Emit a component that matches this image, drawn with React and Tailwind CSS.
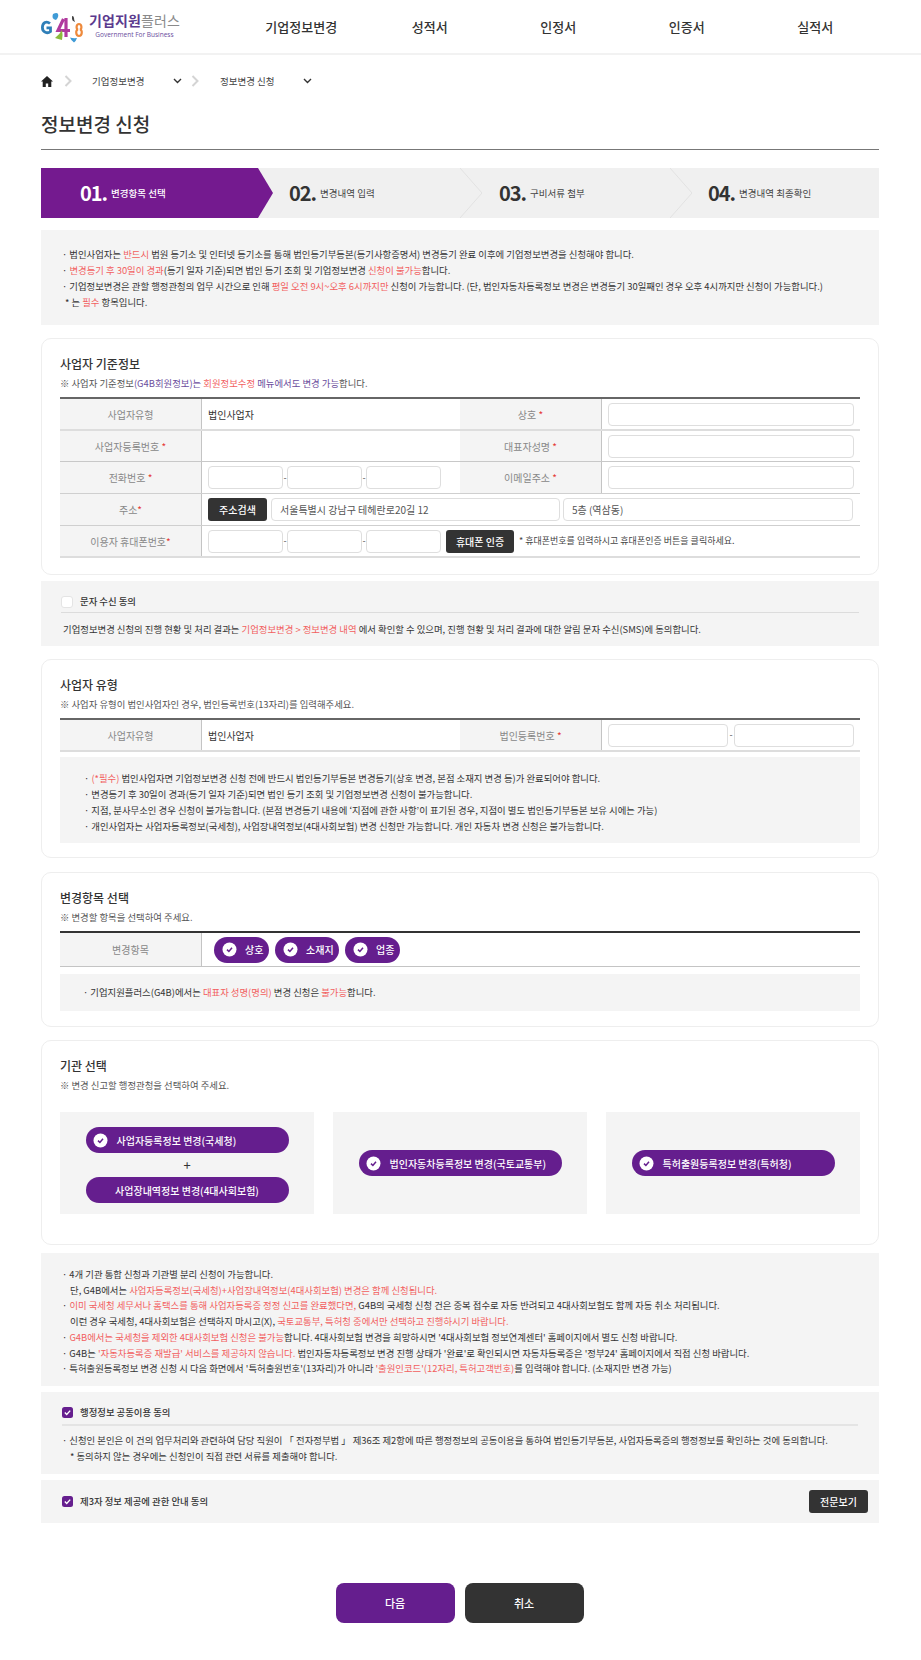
import React from "react";

const R = ({ children }) => <span className="text-[#f25f5f]">{children}</span>;
const P = ({ children }) => <span className="text-[#6a4c9c]">{children}</span>;
const Star = () => <span className="text-[#e53935]">*</span>;

function Logo() {
  return (
    <div className="flex items-center">
      <svg width="46" height="32" viewBox="0 0 46 32" fill="none" className="mr-[2px]">
        <path d="M9 12.5 C5.5 9.5 1.4 11.5 1.4 16.5 C1.4 21.5 6.5 23 9.5 20.5 V16.8 H5.5" stroke="#2f7fb8" strokeWidth="2.8" />
        <path d="M22.5 8 L17 19.5 H29 M25 7 V26" stroke="#b03a9e" strokeWidth="3.2" />
        <path d="M38 13 C35 13 35 18 37 18.5 C34.5 19 34.5 25 38 25 C41.5 25 41.5 19 39 18.5 C41 18 41 13 38 13Z" stroke="#ee8a3c" strokeWidth="2.2" />
        <path d="M12 3 q4 -2 5 0 q1 3 -2 6 q-5 -1 -3 -6z" fill="#3f9bd6" />
        <path d="M14 27 q5 -4 7 -8 q1 4 0 10 q-4 -1 -7 -2z" fill="#8dbb3c" />
        <path d="M29 26.5 q3 1 7 .5 q-1 3 -3 4.5 q-3 -2 -4 -5z" fill="#3f9bd6" />
        <path d="M31 5 q2 0 2 2 q0 2 1 4 q-3 -1 -3 -3z" fill="#444" />
      </svg>
      <div className="flex flex-col items-center mt-[-2px]">
        <div className="text-[14px] leading-[18px] font-bold tracking-[0.1px] text-[#5b3a8e]">
          기업지원<span className="font-normal text-[#8a8a8a]">플러스</span>
        </div>
        <div className="text-[6.5px] leading-[10px] mt-[1px] text-[#6a4c9c] font-['Open_Sans',sans-serif]">Government For Business</div>
      </div>
    </div>
  );
}

function Header() {
  return (
    <header className="h-[55px] border-b-2 border-[#f2f2f2] flex items-center pl-[41px]">
      <div className="w-[196px]"><Logo /></div>
      <nav className="flex text-[13px] font-medium text-[#333]">
        {["기업정보변경", "성적서", "인정서", "인증서", "실적서"].map((m) => (
          <div key={m} className="w-[128.5px] text-center">{m}</div>
        ))}
      </nav>
    </header>
  );
}

const Sep = () => (
  <svg width="8" height="12" viewBox="0 0 8 12" fill="none"><path d="M1.5 1 L6.5 6 L1.5 11" stroke="#d4d4d4" strokeWidth="2" /></svg>
);
const Down = () => (
  <svg width="9" height="6" viewBox="0 0 9 6" fill="none"><path d="M1 1 L4.5 4.5 L8 1" stroke="#333" strokeWidth="1.4" /></svg>
);

function Breadcrumb() {
  return (
    <div className="flex items-center h-[14px] mt-[19px] text-[9.5px] text-[#444]">
      <svg width="12" height="11" viewBox="0 0 12 11" fill="#222"><path d="M6 0 L12 5.6 H10.3 V11 H7.2 V7.4 H4.8 V11 H1.7 V5.6 H0 Z" /></svg>
      <span className="ml-[11px]"><Sep /></span>
      <span className="ml-[20px] w-[81px]">기업정보변경</span>
      <Down />
      <span className="ml-[9px]"><Sep /></span>
      <span className="ml-[21px] w-[83px]">정보변경 신청</span>
      <Down />
    </div>
  );
}

function Steps() {
  const chevron = (
    <svg className="absolute right-0 top-0" width="22" height="50" viewBox="0 0 22 50" fill="none">
      <path d="M0 0 L22 25 L0 50" stroke="#e2e2e2" />
    </svg>
  );
  return (
    <div className="flex h-[50px] mt-[18px] bg-[#f0f0f0] text-[9.5px] text-[#444]">
      <div className="w-[232px] pl-[39px] flex items-center bg-[#741a8f] text-white font-medium [clip-path:polygon(0_0,217px_0,232px_50%,217px_100%,0_100%)]">
        <span className="text-[20px] font-bold tracking-[-1px] mr-[4px]">01.</span>변경항목 선택
      </div>
      <div className="relative w-[209px] pl-[16px] flex items-center">
        <span className="text-[20px] font-bold tracking-[-1px] text-[#333] mr-[4px]">02.</span>변경내역 입력{chevron}
      </div>
      <div className="relative w-[210px] pl-[17px] flex items-center">
        <span className="text-[20px] font-bold tracking-[-1px] text-[#333] mr-[4px]">03.</span>구비서류 첨부{chevron}
      </div>
      <div className="pl-[16px] flex items-center">
        <span className="text-[20px] font-bold tracking-[-1px] text-[#333] mr-[4px]">04.</span>변경내역 최종확인
      </div>
    </div>
  );
}

const Field = ({ className = "", value = "" }) => (
  <div className={`h-[23px] border border-[#dedede] rounded-[4px] bg-white px-[8px] text-[10px] leading-[21px] text-[#555] ${className}`}>{value}</div>
);
const Dash = ({ w = "w-[4px]" }) => <span className={`${w} text-center text-[9px] text-[#555]`}>-</span>;
const DarkBtn = ({ children, className = "" }) => (
  <div className={`h-[23px] rounded-[3px] bg-[#333] text-white text-[10px] font-medium flex items-center justify-center ${className}`}>{children}</div>
);

const Label = ({ children }) => (
  <div className="w-[142px] shrink-0 bg-[#f4f4f4] border-r border-[#c4c4c4] flex items-center justify-center text-[10px] text-[#888]">
    <span>{children}</span>
  </div>
);

function Row({ children, className = "h-[32px] border-b border-[#cfcfcf]" }) {
  return <div className={`flex ${className}`}>{children}</div>;
}

function Cell({ children, className = "" }) {
  return <div className={`flex items-center px-[6px] ${className}`}>{children}</div>;
}

const Phone = () => (
  <>
    <Field className="w-[75px]" />
    <Dash />
    <Field className="w-[75px]" />
    <Dash />
    <Field className="w-[75px]" />
  </>
);

function Card({ title, sub, children, className = "" }) {
  return (
    <section className={`border border-[#eeeeee] rounded-[10px] px-[18px] pt-[16px] ${className}`}>
      <h2 className="text-[12px] leading-[18px] font-medium text-[#333]">{title}</h2>
      <p className="text-[9.4px] leading-[14px] mt-[3px] text-[#555]">{sub}</p>
      {children}
    </section>
  );
}

function Check() {
  return (
    <svg width="15" height="15" viewBox="0 0 15 15" className="shrink-0">
      <circle cx="7.5" cy="7.5" r="7" fill="#fff" />
      <path d="M5 7.6 L6.9 9.5 L10 5.8" stroke="#651e8e" strokeWidth="1.5" fill="none" />
    </svg>
  );
}

function Pill({ children, className = "" }) {
  return (
    <div className={`h-[26px] rounded-full bg-[#651e8e] text-white text-[10px] font-medium flex items-center ${className}`}>{children}</div>
  );
}

function BusinessInfo() {
  return (
    <Card
      className="h-[237px] mt-[13px]"
      title="사업자 기준정보"
      sub={<>※ 사업자 기준정보<P>(G4B회원정보)는</P> <R>회원정보수정</R> <P>메뉴에서도 변경 가능</P>합니다.</>}
    >
      <div className="mt-[7px] border-t-2 border-[#666]">
        <Row className="h-[32px] border-b-2 border-[#dddddd]">
          <Label>사업자유형</Label>
          <Cell className="w-[258px] text-[10px] text-[#333]">법인사업자</Cell>
          <Label>상호 <Star /></Label>
          <Cell className="grow"><Field className="w-full" /></Cell>
        </Row>
        <Row className="h-[31px] border-b border-[#c8c8c8]">
          <Label>사업자등록번호 <Star /></Label>
          <Cell className="w-[258px]" />
          <Label>대표자성명 <Star /></Label>
          <Cell className="grow"><Field className="w-full" /></Cell>
        </Row>
        <Row>
          <Label>전화번호 <Star /></Label>
          <Cell className="w-[258px]"><Phone /></Cell>
          <Label>이메일주소 <Star /></Label>
          <Cell className="grow"><Field className="w-full" /></Cell>
        </Row>
        <Row>
          <Label>주소<Star /></Label>
          <Cell className="grow">
            <DarkBtn className="w-[59px] mr-[4px]">주소검색</DarkBtn>
            <Field className="w-[289px] mr-[3px]" value="서울특별시 강남구 테헤란로20길 12" />
            <Field className="w-[290px]" value="5층 (역삼동)" />
          </Cell>
        </Row>
        <Row className="h-[32px] border-b-2 border-[#dddddd]">
          <Label>이용자 휴대폰번호<Star /></Label>
          <Cell className="grow">
            <Phone />
            <DarkBtn className="w-[68px] ml-[5px] mr-[5px]">휴대폰 인증</DarkBtn>
            <span className="text-[9px] text-[#444]">* 휴대폰번호를 입력하시고 휴대폰인증 버튼을 클릭하세요.</span>
          </Cell>
        </Row>
      </div>
    </Card>
  );
}

function SmsConsent() {
  return (
    <div className="h-[65px] mt-[6px] bg-[#f4f4f4] px-[20px] text-[9.4px] text-[#333]">
      <div className="h-[32px] pt-[10px] flex items-center border-b border-[#dcdcdc]">
        <span className="w-[12px] h-[12px] rounded-[3px] bg-white border border-[#e4e4e4] mr-[7px]" />
        <span className="font-medium">문자 수신 동의</span>
      </div>
      <p className="mt-[9px] ml-[2px] leading-[14px]">
        기업정보변경 신청의 진행 현황 및 처리 결과는 <R>기업정보변경 &gt; 정보변경 내역</R> 에서 확인할 수 있으며, 진행 현황 및 처리 결과에 대한 알림 문자 수신(SMS)에 동의합니다.
      </p>
    </div>
  );
}

function BusinessType() {
  return (
    <Card
      className="h-[199px] mt-[13px]"
      title="사업자 유형"
      sub="※ 사업자 유형이 법인사업자인 경우, 법인등록번호(13자리)를 입력해주세요."
    >
      <div className="mt-[7px] border-t-2 border-[#666]">
        <Row className="h-[32px] border-b-2 border-[#dddddd]">
          <Label>사업자유형</Label>
          <Cell className="w-[258px] text-[10px] text-[#333]">법인사업자</Cell>
          <Label>법인등록번호 <Star /></Label>
          <Cell className="grow">
            <Field className="w-[120px]" />
            <Dash w="w-[6px]" />
            <Field className="w-[120px]" />
          </Cell>
        </Row>
      </div>
      <div className="h-[86px] mt-[5px] bg-[#f4f4f4] pl-[24px] pt-[13px] text-[9.4px] leading-[16px] text-[#333]">
        <p>· <R>(*필수)</R> 법인사업자면 기업정보변경 신청 전에 반드시 법인등기부등본 변경등기(상호 변경, 본점 소재지 변경 등)가 완료되어야 합니다.</p>
        <p>· 변경등기 후 30일이 경과(등기 일자 기준)되면 법인 등기 조회 및 기업정보변경 신청이 불가능합니다.</p>
        <p>· 지점, 분사무소인 경우 신청이 불가능합니다. (본점 변경등기 내용에 ‘지점에 관한 사항’이 표기된 경우, 지점이 별도 법인등기부등본 보유 시에는 가능)</p>
        <p>· 개인사업자는 사업자등록정보(국세청), 사업장내역정보(4대사회보험) 변경 신청만 가능합니다. 개인 자동차 변경 신청은 불가능합니다.</p>
      </div>
    </Card>
  );
}

function ChangeItems() {
  return (
    <Card className="h-[155px] mt-[14px]" title="변경항목 선택" sub="※ 변경할 항목을 선택하여 주세요.">
      <div className="mt-[7px] border-t-2 border-[#333]">
        <div className="flex h-[34px] border-b border-[#c4c4c4]">
          <Label>변경항목</Label>
          <div className="flex items-center gap-[6px] pl-[12px]">
            <Pill className="w-[55px] pl-[8px] gap-[8px]"><Check />상호</Pill>
            <Pill className="w-[64px] pl-[8px] gap-[8px]"><Check />소재지</Pill>
            <Pill className="w-[55px] pl-[8px] gap-[8px]"><Check />업종</Pill>
          </div>
        </div>
      </div>
      <div className="h-[37px] mt-[7px] bg-[#f4f4f4] pl-[23px] flex items-center text-[9.4px] text-[#333]">
        <p>· 기업지원플러스(G4B)에서는 <R>대표자 성명(명의)</R> 변경 신청은 <R>불가능</R>합니다.</p>
      </div>
    </Card>
  );
}

function Agencies() {
  return (
    <Card className="h-[205px] mt-[13px]" title="기관 선택" sub="※ 변경 신고할 행정관청을 선택하여 주세요.">
      <div className="grid grid-cols-3 gap-[19px] h-[102px] mt-[20px]">
        <div className="bg-[#f4f4f4] pt-[4px] flex flex-col items-center justify-center">
          <Pill className="w-[203px] pl-[7px] gap-[9px]"><Check />사업자등록정보 변경(국세청)</Pill>
          <div className="h-[24px] flex items-center text-[13px] text-[#333]">+</div>
          <Pill className="w-[203px] justify-center">사업장내역정보 변경(4대사회보험)</Pill>
        </div>
        <div className="bg-[#f4f4f4] flex items-center justify-center">
          <Pill className="w-[203px] pl-[7px] gap-[9px]"><Check />법인자동차등록정보 변경(국토교통부)</Pill>
        </div>
        <div className="bg-[#f4f4f4] flex items-center justify-center">
          <Pill className="w-[203px] pl-[7px] gap-[9px]"><Check />특허출원등록정보 변경(특허청)</Pill>
        </div>
      </div>
    </Card>
  );
}

function AgencyNotes() {
  return (
    <div className="h-[133px] mt-[8px] bg-[#f4f4f4] pl-[21px] pt-[14px] text-[9.4px] leading-[15.7px] text-[#333]">
      <p>· 4개 기관 통합 신청과 기관별 분리 신청이 가능합니다.</p>
      <p className="pl-[8px]">단, G4B에서는 <R>사업자등록정보(국세청)+사업장내역정보(4대사회보험) 변경은 함께 신청됩니다.</R></p>
      <p>· <R>이미 국세청 세무서나 홈택스를 통해 사업자등록증 정정 신고를 완료했다면,</R> G4B의 국세청 신청 건은 중복 접수로 자동 반려되고 4대사회보험도 함께 자동 취소 처리됩니다.</p>
      <p className="pl-[8px]">이런 경우 국세청, 4대사회보험은 선택하지 마시고(X), <R>국토교통부, 특허청 중에서만 선택하고 진행하시기 바랍니다.</R></p>
      <p>· <R>G4B에서는 국세청을 제외한 4대사회보험 신청은 불가능</R>합니다. 4대사회보험 변경을 희망하시면 '4대사회보험 정보연계센터' 홈페이지에서 별도 신청 바랍니다.</p>
      <p>· G4B는 <R>'자동차등록증 재발급' 서비스를 제공하지 않습니다.</R> 법인자동차등록정보 변경 진행 상태가 '완료'로 확인되시면 자동차등록증은 '정부24' 홈페이지에서 직접 신청 바랍니다.</p>
      <p>· 특허출원등록정보 변경 신청 시 다음 화면에서 '특허출원번호'(13자리)가 아니라 <R>'출원인코드'(12자리, 특허고객번호)</R>를 입력해야 합니다. (소재지만 변경 가능)</p>
    </div>
  );
}

const CheckedBox = () => (
  <svg width="11" height="11" viewBox="0 0 11 11" className="mr-[7px] shrink-0">
    <rect width="11" height="11" rx="2.5" fill="#651e8e" />
    <path d="M2.8 5.6 L4.7 7.5 L8.2 3.6" stroke="#fff" strokeWidth="1.4" fill="none" />
  </svg>
);

function Consents() {
  return (
    <>
      <div className="h-[82px] mt-[6px] bg-[#f4f4f4] px-[21px] text-[9.4px] text-[#333]">
        <div className="h-[34px] pt-[9px] flex items-center border-b-2 border-[#e4e4e4]">
          <CheckedBox />
          <span className="font-medium">행정정보 공동이용 동의</span>
        </div>
        <div className="mt-[6px] leading-[16px]">
          <p>· 신청인 본인은 이 건의 업무처리와 관련하여 담당 직원이 「 전자정부법 」 제36조 제2항에 따른 행정정보의 공동이용을 통하여 법인등기부등본, 사업자등록증의 행정정보를 확인하는 것에 동의합니다.</p>
          <p className="pl-[8px]">* 동의하지 않는 경우에는 신청인이 직접 관련 서류를 제출해야 합니다.</p>
        </div>
      </div>
      <div className="h-[43px] mt-[6px] bg-[#f4f4f4] pl-[21px] pr-[11px] flex items-center justify-between text-[9.4px] text-[#333]">
        <div className="flex items-center">
          <CheckedBox />
          <span className="font-medium">제3자 정보 제공에 관한 안내 동의</span>
        </div>
        <DarkBtn className="w-[59px]">전문보기</DarkBtn>
      </div>
    </>
  );
}

export default function App() {
  return (
    <div className="w-[921px] h-[1660px] bg-white text-[#333] font-['Noto_Sans_CJK_KR','Noto_Sans',sans-serif]">
      <Header />
      <main className="w-[838px] ml-[41px]">
        <Breadcrumb />
        <h1 className="mt-[22px] text-[19px] leading-[28px] font-medium text-[#333]">정보변경 신청</h1>
        <div className="mt-[11px] border-t border-[#777]" />
        <Steps />
        <div className="h-[95px] mt-[12px] bg-[#f4f4f4] pl-[21px] pt-[16px] text-[9.4px] leading-[16px] text-[#333]">
          <p>· 법인사업자는 <R>반드시</R> 법원 등기소 및 인터넷 등기소를 통해 법인등기부등본(등기사항증명서) 변경등기 완료 이후에 기업정보변경을 신청해야 합니다.</p>
          <p>· <R>변경등기 후 30일이 경과</R>(등기 일자 기준)되면 법인 등기 조회 및 기업정보변경 <R>신청이 불가능</R>합니다.</p>
          <p>· 기업정보변경은 관할 행정관청의 업무 시간으로 인해 <R>평일 오전 9시~오후 6시까지만</R> 신청이 가능합니다. (단, 법인자동차등록정보 변경은 변경등기 30일째인 경우 오후 4시까지만 신청이 가능합니다.)</p>
          <p className="pl-[3px]">* 는 <R>필수</R> 항목입니다.</p>
        </div>
        <BusinessInfo />
        <SmsConsent />
        <BusinessType />
        <ChangeItems />
        <Agencies />
        <AgencyNotes />
        <Consents />
        <div className="flex justify-center gap-[10px] mt-[60px] pr-[1px]">
          <div className="w-[119px] h-[40px] rounded-[8px] bg-[#651e8e] text-white text-[11px] font-medium flex items-center justify-center">다음</div>
          <div className="w-[119px] h-[40px] rounded-[8px] bg-[#333] text-white text-[11px] font-medium flex items-center justify-center">취소</div>
        </div>
      </main>
    </div>
  );
}
